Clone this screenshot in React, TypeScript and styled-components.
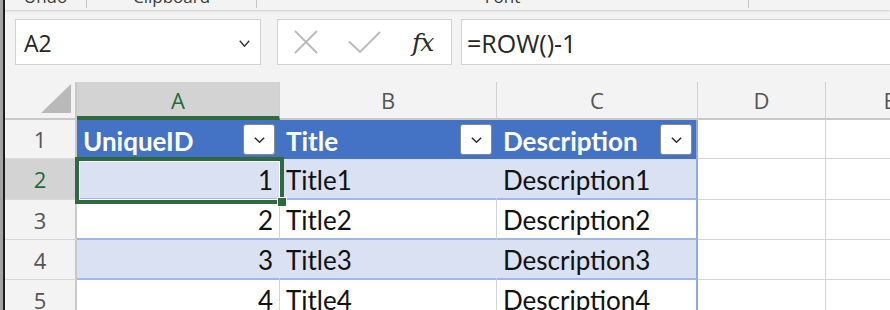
import React from 'react';
import styled, { createGlobalStyle } from 'styled-components';

const Global = createGlobalStyle`
  html, body { margin: 0; padding: 0; background: #f3f3f3; overflow: hidden; }
  #root { width: 890px; height: 310px; overflow: hidden; }
  * { box-sizing: border-box; }
`;

const Frame = styled.div`
  display: flex;
  width: 890px;
  height: 310px;
  overflow: hidden;
  background: #f3f3f3;
`;

const LeftEdge = styled.div`
  width: 5px;
  flex: none;
  background: #a3a3a3;
  border-right: 2px solid #1c1c1c;
`;

const Main = styled.div`
  flex: 1;
  min-width: 0;
  display: flex;
  flex-direction: column;
  overflow: hidden;
`;

const Ribbon = styled.div`
  height: 10px;
  flex: none;
  display: flex;
  overflow: hidden;
  background: #f3f3f3;
  box-shadow: 0 1px 2px rgba(0, 0, 0, 0.16);
  position: relative;
  z-index: 1;
`;

const RibbonGroup = styled.div<{ $w: number; $last?: boolean }>`
  width: ${(p) => p.$w}px;
  flex: none;
  display: flex;
  justify-content: center;
  border-right: ${(p) => (p.$last ? 'none' : '1px solid #c4c4c4')};
  height: 8px;
`;

const RibbonLabel = styled.span`
  font-family: 'Open Sans', 'Noto Sans', sans-serif;
  font-size: 17px;
  line-height: 17px;
  color: #3a3a3a;
  margin-top: -12px;
  white-space: nowrap;
`;

const FormulaBar = styled.div`
  height: 72px;
  flex: none;
  display: flex;
  align-items: flex-start;
  padding: 9px 0 0 10px;
`;

const NameBox = styled.div`
  width: 246px;
  height: 46px;
  flex: none;
  background: #fff;
  border: 1px solid #d2d2d2;
  display: flex;
  align-items: center;
  justify-content: space-between;
  padding: 2px 10px 0 8px;
  font-family: 'Open Sans', 'Noto Sans', sans-serif;
  font-size: 23px;
  color: #262626;
`;

const IconBox = styled.div`
  width: 175px;
  height: 46px;
  flex: none;
  margin-left: 16px;
  background: #fff;
  border: 1px solid #d2d2d2;
  display: flex;
  align-items: center;
  padding-left: 16px;
  gap: 30px;
`;

const FxMark = styled.span`
  font-family: 'DejaVu Serif', 'Liberation Serif', serif;
  font-style: italic;
  font-size: 25px;
  color: #2b2b2b;
  margin-left: 1px;
  letter-spacing: -1px;
`;

const FormulaInput = styled.div`
  flex: 1;
  height: 46px;
  margin-left: 9px;
  background: #fff;
  border: 1px solid #d2d2d2;
  border-right: none;
  display: flex;
  align-items: center;
  padding: 1px 0 0 5px;
  font-family: 'Open Sans', 'Noto Sans', sans-serif;
  font-size: 25px;
  color: #262626;
`;

const GridWrap = styled.div`
  position: relative;
  flex: 1;
  overflow: hidden;
`;

const Sheet = styled.div`
  display: grid;
  grid-template-columns: 72px 203px 217px 201px 128px 128px;
  grid-template-rows: 38px 39px 41px 40px 40px 40px;
  width: 949px;
`;

const Corner = styled.div`
  background: #f3f3f3;
  border-right: 2px solid #c8c8c8;
  border-bottom: 2px solid #c8c8c8;
  display: flex;
  align-items: flex-end;
  justify-content: flex-end;
  padding: 0 4px 5px 0;
`;

const ColHead = styled.div<{ $active?: boolean }>`
  background: ${(p) => (p.$active ? '#d3d3d3' : '#f3f3f3')};
  border-right: 1px solid #d0d0d0;
  border-bottom: ${(p) => (p.$active ? '4px solid #2f6a3e' : '2px solid #c8c8c8')};
  display: flex;
  align-items: center;
  justify-content: center;
  padding-top: ${(p) => (p.$active ? '2px' : '0')};
  font-family: 'Open Sans', 'Noto Sans', sans-serif;
  font-size: 22px;
  color: ${(p) => (p.$active ? '#1f6b3b' : '#555')};
`;

const RowHead = styled.div<{ $active?: boolean }>`
  background: ${(p) => (p.$active ? '#d3d3d3' : '#f3f3f3')};
  border-right: 2px solid #c8c8c8;
  border-bottom: 1px solid #d8d8d8;
  display: flex;
  align-items: center;
  justify-content: center;
  font-family: 'Open Sans', 'Noto Sans', sans-serif;
  font-size: 22px;
  color: ${(p) => (p.$active ? '#1f6b3b' : '#555')};
`;

type Kind = 'thead' | 'band' | 'plain' | 'empty';

const bg: Record<Kind, string> = {
  thead: '#4472c4',
  band: '#d9e1f2',
  plain: '#ffffff',
  empty: '#ffffff',
};

const Cell = styled.div<{ $kind: Kind; $end?: boolean; $right?: boolean }>`
  background: ${(p) => bg[p.$kind]};
  border-right: ${(p) =>
    p.$end
      ? '2px solid #8ea9db'
      : p.$kind === 'plain' || p.$kind === 'empty'
      ? '1px solid #d4d4d4'
      : '1px solid transparent'};
  border-bottom: ${(p) =>
    p.$kind === 'empty'
      ? '1px solid #d4d4d4'
      : p.$kind === 'thead'
      ? 'none'
      : '2px solid #a3b8e2'};
  display: flex;
  align-items: center;
  justify-content: ${(p) => (p.$right ? 'flex-end' : 'space-between')};
  padding: 2px ${(p) => (p.$kind === 'thead' ? '4px' : '6px')} 0 6px;
  font-family: Lato, 'Open Sans', sans-serif;
  font-size: 26px;
  font-weight: ${(p) => (p.$kind === 'thead' ? 700 : 400)};
  color: ${(p) => (p.$kind === 'thead' ? '#ffffff' : '#111')};
  white-space: nowrap;
  overflow: hidden;
`;

const FilterButton = styled.div`
  width: 32px;
  height: 31px;
  flex: none;
  background: #fff;
  border: 1px solid #8a8a8a;
  border-radius: 3px;
  display: flex;
  align-items: center;
  justify-content: center;
  margin-top: -2px;
`;

const Selection = styled.div`
  position: absolute;
  left: 70px;
  top: 75px;
  width: 209px;
  height: 47px;
  border: 4px solid #2f6a3e;
  box-shadow: inset 0 0 0 1px #fff;
  pointer-events: none;
`;

const FillHandle = styled.div`
  position: absolute;
  right: -7px;
  bottom: -7px;
  width: 10px;
  height: 10px;
  background: #2f6a3e;
  border: 1px solid #fff;
`;

const Chevron = ({ w = 10, h = 6, color = '#222' }: { w?: number; h?: number; color?: string }) => (
  <svg width={w} height={h} viewBox={`0 0 ${w} ${h}`}>
    <polyline points={`0.8,0.8 ${w / 2},${h - 0.8} ${w - 0.8},0.8`} fill="none" stroke={color} strokeWidth="1.4" />
  </svg>
);

const CrossIcon = () => (
  <svg width="24" height="24" viewBox="0 0 24 24">
    <path d="M1 1 L23 23 M23 1 L1 23" stroke="#b9b9b9" strokeWidth="1.8" fill="none" />
  </svg>
);

const CheckIcon = () => (
  <svg width="33" height="22" viewBox="0 0 33 22">
    <path d="M1 10.5 L12 21 L32 1" stroke="#b9b9b9" strokeWidth="1.8" fill="none" />
  </svg>
);

const SelectAll = () => (
  <svg width="30" height="29" viewBox="0 0 30 29">
    <polygon points="30,0 30,29 0,29" fill="#b9b9b9" />
  </svg>
);

type Row = { n: number; id: number; title: string; desc: string };
const rows: Row[] = [1, 2, 3, 4].map((i) => ({
  n: i + 1,
  id: i,
  title: `Title${i}`,
  desc: `Description${i}`,
}));

const headers = ['UniqueID', 'Title', 'Description'];
const cols = ['A', 'B', 'C', 'D', 'E'];

export default function App() {
  return (
    <>
      <Global />
      <Frame>
        <LeftEdge />
        <Main>
          <Ribbon>
            <RibbonGroup $w={82}>
              <RibbonLabel>Undo</RibbonLabel>
            </RibbonGroup>
            <RibbonGroup $w={170}>
              <RibbonLabel>Clipboard</RibbonLabel>
            </RibbonGroup>
            <RibbonGroup $w={492}>
              <RibbonLabel>Font</RibbonLabel>
            </RibbonGroup>
            <RibbonGroup $w={140} $last />
          </Ribbon>
          <FormulaBar>
            <NameBox>
              <span>A2</span>
              <Chevron w={11} h={7} color="#333" />
            </NameBox>
            <IconBox>
              <CrossIcon />
              <CheckIcon />
              <FxMark>fx</FxMark>
            </IconBox>
            <FormulaInput>=ROW()-1</FormulaInput>
          </FormulaBar>
          <GridWrap>
            <Sheet>
              <Corner>
                <SelectAll />
              </Corner>
              {cols.map((c, i) => (
                <ColHead key={c} $active={i === 0}>
                  {c}
                </ColHead>
              ))}
              <RowHead>1</RowHead>
              {headers.map((h, i) => (
                <Cell key={h} $kind="thead" $end={i === 2}>
                  <span>{h}</span>
                  <FilterButton>
                    <Chevron w={11} h={6} />
                  </FilterButton>
                </Cell>
              ))}
              <Cell $kind="empty" />
              <Cell $kind="empty" />
              {rows.map((r) => {
                const kind: Kind = r.id % 2 === 1 ? 'band' : 'plain';
                return (
                  <React.Fragment key={r.n}>
                    <RowHead $active={r.n === 2}>{r.n}</RowHead>
                    <Cell $kind={kind} $right>
                      {r.id}
                    </Cell>
                    <Cell $kind={kind}>{r.title}</Cell>
                    <Cell $kind={kind} $end>
                      {r.desc}
                    </Cell>
                    <Cell $kind="empty" />
                    <Cell $kind="empty" />
                  </React.Fragment>
                );
              })}
            </Sheet>
            <Selection>
              <FillHandle />
            </Selection>
          </GridWrap>
        </Main>
      </Frame>
    </>
  );
}
